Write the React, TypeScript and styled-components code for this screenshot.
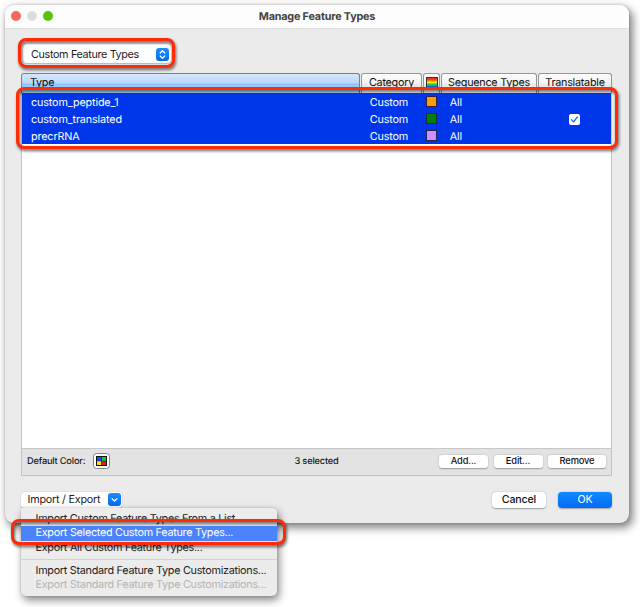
import React from "react";
import styled, { createGlobalStyle } from "styled-components";

const GlobalStyle = createGlobalStyle`
  * { box-sizing: border-box; }
  html, body, #root { height: 100%; }
  body {
    margin: 0;
    background: #fff;
    overflow: hidden;
    font-family: Inter, "Liberation Sans", sans-serif;
    font-size: 11px;
    color: #1c1c1c;
    white-space: nowrap;
    text-rendering: geometricPrecision;
  }
`;

const Desktop = styled.main`
  width: 640px;
  height: 607px;
  padding: 5px 11px 0 5px;
  position: relative;
`;

const Window = styled.section`
  height: 518px;
  display: flex;
  flex-direction: column;
  border-radius: 9px;
  background: #ebebeb;
  box-shadow: 3px 4px 9px 1px rgba(0, 0, 0, 0.48), 0 0 3px rgba(0, 0, 0, 0.16);
`;

const TitleBar = styled.header`
  height: 24px;
  flex: none;
  display: grid;
  grid-template-columns: 60px 1fr 60px;
  align-items: center;
  padding-bottom: 1px;
  border-radius: 9px 9px 0 0;
  border-bottom: 1px solid #dcdcdc;
  background: #fdfdfd;
`;

const Lights = styled.div`
  display: flex;
  gap: 6px;
  padding-left: 6.4px;
`;

const Light = styled.i<{ $color: string }>`
  width: 10px;
  height: 10px;
  border-radius: 50%;
  background: ${(p) => p.$color};
`;

const Title = styled.h1`
  margin: 0;
  text-align: center;
  font-size: 10.8px;
  font-weight: 700;
  letter-spacing: -0.18px;
  color: #414141;
`;

const Body = styled.div`
  flex: 1;
  display: flex;
  flex-direction: column;
  padding: 15px 17px 0 16px;
`;

const Picker = styled.button`
  width: 148px;
  height: 19px;
  margin-left: 2px;
  padding: 1px 2.5px 0 8px;
  display: flex;
  align-items: center;
  justify-content: space-between;
  border: 0;
  border-radius: 4px;
  background: #fff;
  box-shadow: 0 0.5px 1.5px rgba(0, 0, 0, 0.25);
  font: inherit;
  font-size: 10.8px;
  letter-spacing: -0.35px;
  color: #1c1c1c;
`;

const Badge = styled.svg`
  display: block;
  width: 13px;
  height: 13px;
  border-radius: 3px;
  background: linear-gradient(#1e8cff, #006df2);
  fill: none;
  stroke: #fff;
  stroke-width: 1.3;
  stroke-linecap: round;
  stroke-linejoin: round;
`;

const Table = styled.div`
  height: 403px;
  margin-top: 10px;
  display: flex;
  flex-direction: column;
  border: 1px solid #c3c3c3;
  border-top: 0;
  background: #fff;
`;

const HeadRow = styled.div`
  height: 20px;
  margin: 0 -1px;
  display: grid;
  grid-template-columns: 339px 62px 18px 97px 1fr;
  background: #ebebeb;
`;

const HeadCell = styled.div<{ $active?: boolean }>`
  display: flex;
  align-items: center;
  justify-content: ${(p) => (p.$active ? "flex-start" : "center")};
  margin-left: ${(p) => (p.$active ? 0 : 1)}px;
  padding: 0 0 3px ${(p) => (p.$active ? 8 : 0)}px;
  border: 1px solid ${(p) => (p.$active ? "#7779bb" : "#969696")};
  border-bottom: 0;
  border-radius: 3px 3px 0 0;
  background: ${(p) =>
    p.$active
      ? "linear-gradient(#d5e7fc 0%, #b9d7fa 48%, #8fc2fa 52%, #b8e0ff 100%)"
      : "linear-gradient(#fcfcfc 0%, #f4f4f4 48%, #e9e9e9 52%, #f5f5f5 100%)"};
  font-size: 10.8px;
  letter-spacing: -0.25px;
  color: #111;
`;

const Spectrum = styled.span`
  width: 12px;
  height: 12px;
  margin-top: 1px;
  border: 1px solid #333;
  background: linear-gradient(#f03020 0 12%, #ff8a00 28%, #f8f000 44%, #30d030 62%, #10a0e0 76%, #2030d8 92%);
`;

const Row = styled.div`
  height: 16.9px;
  padding-top: 2px;
  display: grid;
  grid-template-columns: 338px 62px 18px 97px 1fr;
  align-items: center;
  background: #0036ea;
  color: #fff;
  font-size: 10.8px;
  letter-spacing: -0.14px;
`;

const Cell = styled.span<{ $indent?: number; $center?: boolean }>`
  display: flex;
  padding-left: ${(p) => p.$indent ?? 0}px;
  justify-content: ${(p) => (p.$center ? "center" : "flex-start")};
`;

const Swatch = styled.i<{ $color: string }>`
  width: 11px;
  height: 11px;
  margin-top: -2px;
  border: 1px solid #292444;
  background: ${(p) => p.$color};
`;

const Check = styled.svg`
  display: block;
  width: 11px;
  height: 11px;
  border-radius: 2px;
  background: #fff;
  fill: none;
  stroke: #0870f0;
  stroke-width: 1.2;
  stroke-linecap: round;
  stroke-linejoin: round;
`;

const TableFoot = styled.footer`
  height: 27px;
  margin-top: auto;
  padding: 0 5px 2px;
  display: grid;
  grid-template-columns: 1fr auto 1fr;
  align-items: center;
  border-top: 1px solid #c8c8c8;
  background: #e3e3e3;
  font-size: 9.3px;
  font-weight: 500;
  letter-spacing: -0.22px;
`;

const DefaultColor = styled.div`
  display: flex;
  align-items: center;
  gap: 8px;
`;

const ColorWell = styled.span`
  width: 17px;
  height: 16px;
  display: grid;
  place-items: center;
  border: 1px solid #858585;
  border-radius: 3.5px;
  background: #fff;
`;

const FootButtons = styled.div`
  display: flex;
  justify-content: flex-end;
  gap: 5.5px;
`;

const Button = styled.button<{ $width: number; $large?: boolean; $primary?: boolean }>`
  width: ${(p) => p.$width}px;
  height: ${(p) => (p.$large ? 16 : 13)}px;
  padding: ${(p) => (p.$large ? 1 : 0)}px 0 0;
  border: 0;
  border-radius: ${(p) => (p.$large ? 4 : 3)}px;
  background: ${(p) => (p.$primary ? "linear-gradient(#1289ff, #006cf5)" : "#fff")};
  box-shadow: 0 0.5px 1.5px rgba(0, 0, 0, 0.32);
  color: ${(p) => (p.$primary ? "#fff" : "#111")};
  font: inherit;
  font-weight: ${(p) => (p.$large && !p.$primary ? 500 : "inherit")};
  font-size: ${(p) => (p.$large ? 10.6 : 9.3)}px;
  letter-spacing: -0.15px;
  line-height: 1;
`;

const Actions = styled.div`
  margin-top: 15.5px;
  display: flex;
  align-items: center;
  gap: 12px;
`;

const Pulldown = styled.button`
  width: 101px;
  height: 16px;
  margin-right: auto;
  padding: 0 1px 0 6.5px;
  display: flex;
  align-items: center;
  justify-content: space-between;
  border: 0;
  border-radius: 4px;
  background: #fff;
  box-shadow: 0 0.5px 1.5px rgba(0, 0, 0, 0.2);
  font: inherit;
  font-size: 10.8px;
  letter-spacing: -0.24px;
  color: #1c1c1c;
`;

const Menu = styled.ul`
  position: absolute;
  left: 21px;
  top: 508px;
  width: 256px;
  height: 88px;
  margin: 0;
  padding: 3.5px 0 0;
  list-style: none;
  border-radius: 0 4px 5px 5px;
  background: #ececec;
  box-shadow: 2px 4px 8px rgba(0, 0, 0, 0.48), 0 0 2px rgba(0, 0, 0, 0.22);
`;

const MenuItem = styled.li<{ $state?: "selected" | "disabled" }>`
  height: 14.5px;
  padding-left: 14.5px;
  line-height: 14.5px;
  font-size: 10.8px;
  letter-spacing: -0.27px;
  color: ${(p) => (p.$state === "selected" ? "#fff" : p.$state === "disabled" ? "#b4b4b4" : "#222")};
  background: ${(p) => (p.$state === "selected" ? "#4a83fb" : "transparent")};
`;

const Separator = styled.li`
  height: 1px;
  margin: 4px 0 3.5px;
  background: #d2d2d2;
`;

const Callout = styled.div<{ $x: number; $y: number; $w: number; $h: number }>`
  position: absolute;
  left: ${(p) => p.$x}px;
  top: ${(p) => p.$y}px;
  width: ${(p) => p.$w}px;
  height: ${(p) => p.$h}px;
  border: 3px solid #fd2b08;
  border-radius: 8px;
  filter: drop-shadow(1px 2px 1.5px rgba(0, 0, 0, 0.6));
  pointer-events: none;
`;

const types = [
  { name: "custom_peptide_1", color: "#ff9b00", translatable: false },
  { name: "custom_translated", color: "#008200", translatable: true },
  { name: "precrRNA", color: "#cd91ff", translatable: false },
];

export default function App() {
  return (
    <>
      <GlobalStyle />
      <Desktop>
        <Window>
          <TitleBar>
            <Lights>
              <Light $color="#f36a5c" />
              <Light $color="#dedede" />
              <Light $color="#57c20a" />
            </Lights>
            <Title>Manage Feature Types</Title>
          </TitleBar>
          <Body>
            <Picker>
              Custom Feature Types
              <Badge viewBox="0 0 13 13">
                <path d="M4.2 5 6.5 2.8 8.8 5M4.2 8 6.5 10.2 8.8 8" />
              </Badge>
            </Picker>
            <Table>
              <HeadRow>
                <HeadCell $active>Type</HeadCell>
                <HeadCell>Category</HeadCell>
                <HeadCell><Spectrum /></HeadCell>
                <HeadCell>Sequence Types</HeadCell>
                <HeadCell>Translatable</HeadCell>
              </HeadRow>
              {types.map((t) => (
                <Row key={t.name}>
                  <Cell $indent={9}>{t.name}</Cell>
                  <Cell $indent={9.7}>Custom</Cell>
                  <Cell $indent={4}><Swatch $color={t.color} /></Cell>
                  <Cell $indent={9.7}>All</Cell>
                  <Cell $center>
                    {t.translatable && (
                      <Check viewBox="0 0 10 10">
                        <path d="M2.4 5.3 4.2 7.2 7.6 2.7" />
                      </Check>
                    )}
                  </Cell>
                </Row>
              ))}
              <TableFoot>
                <DefaultColor>
                  Default Color:
                  <ColorWell>
                    <svg width="11" height="10" viewBox="0 0 11 10">
                      <path fill="#111" d="M0 0h11v10H0z" />
                      <path fill="#1550f0" d="M1 1h4.2v3.8H1z" />
                      <path fill="#18c840" d="M5.8 1h4.2v3.8H5.8z" />
                      <path fill="#ffe100" d="M1 5.2h4.2V9H1z" />
                      <path fill="#f01414" d="M5.8 5.2h4.2V9H5.8z" />
                    </svg>
                  </ColorWell>
                </DefaultColor>
                <span>3 selected</span>
                <FootButtons>
                  <Button $width={49}>Add...</Button>
                  <Button $width={49}>Edit...</Button>
                  <Button $width={58}>Remove</Button>
                </FootButtons>
              </TableFoot>
            </Table>
            <Actions>
              <Pulldown>
                Import / Export
                <Badge viewBox="0 0 13 13">
                  <path d="M4 5.6 6.5 8 9 5.6" />
                </Badge>
              </Pulldown>
              <Button $width={54} $large>Cancel</Button>
              <Button $width={54} $large $primary>OK</Button>
            </Actions>
          </Body>
        </Window>
        <Menu>
          <MenuItem>Import Custom Feature Types From a List...</MenuItem>
          <MenuItem $state="selected">Export Selected Custom Feature Types...</MenuItem>
          <MenuItem>Export All Custom Feature Types...</MenuItem>
          <Separator />
          <MenuItem>Import Standard Feature Type Customizations...</MenuItem>
          <MenuItem $state="disabled">Export Standard Feature Type Customizations...</MenuItem>
        </Menu>
        <Callout $x={18} $y={38} $w={157} $h={30} />
        <Callout $x={16} $y={87} $w={602} $h={62} />
        <Callout $x={11} $y={519} $w={275} $h={26} />
      </Desktop>
    </>
  );
}
